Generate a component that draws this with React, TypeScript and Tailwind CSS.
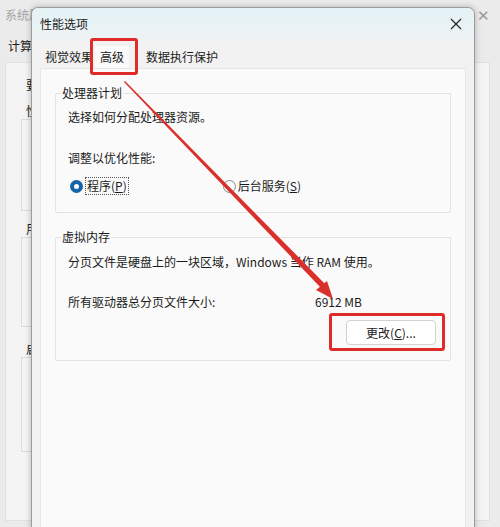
import React from "react";

function Radio({ checked }: { checked?: boolean }) {
  return checked ? (
    <span className="w-[13px] h-[13px] rounded-full bg-[#1565a8] flex items-center justify-center shrink-0">
      <span className="w-[5px] h-[5px] rounded-full bg-white" />
    </span>
  ) : (
    <span className="block w-[13px] h-[13px] rounded-full border border-[#8a8a8a] bg-[#fafafa] shrink-0" />
  );
}

function GroupBox({
  label,
  className,
  children,
}: {
  label: string;
  className?: string;
  children: React.ReactNode;
}) {
  return (
    <div className={`relative border border-[#e3e3e3] rounded-[2px] bg-[#fafafa] ${className ?? ""}`}>
      <span className="absolute left-[5px] top-[-9px] px-[1px] bg-[#fafafa] leading-[16px]">{label}</span>
      {children}
    </div>
  );
}

export default function App() {
  return (
    <div className="relative w-[500px] h-[527px] overflow-hidden bg-[#ebebeb] text-[12px] text-[#1b1b1b] font-['Noto_Sans_CJK_SC','Microsoft_YaHei',sans-serif]">
      {/* background window: 系统属性, mostly hidden behind the dialog */}
      <div className="flex flex-col h-full">
        <div className="h-[30px] flex items-center justify-between pl-[5px] pr-[10px] text-[#a3a3a3]">
          <span>系统属性</span>
          <span className="text-[15px] font-light text-[#9a9a9a]">✕</span>
        </div>
        <div className="h-[32px] flex items-center pl-[8px]">
          <span>计算机名</span>
        </div>
        <div className="flex-1 ml-[5px] mr-[10px] mb-[6px] bg-[#f4f4f4] border border-[#e0e0e0] px-[15px] pt-[14px]">
          <div className="pl-[5px] leading-[16px]">要</div>
          <div className="mt-[10px] pl-[5px] leading-[16px]">性</div>
          <div className="h-[92px] border border-[#dcdcdc]" />
          <div className="mt-[10px] pl-[5px] leading-[16px]">用</div>
          <div className="h-[90px] border border-[#dcdcdc]" />
          <div className="mt-[14px] pl-[5px] leading-[16px]">启</div>
          <div className="h-[95px] border border-[#dcdcdc]" />
        </div>
      </div>

      {/* 性能选项 dialog */}
      <div className="absolute left-[31px] top-[7px] w-[444px] bottom-[-4px] flex flex-col bg-[#f2f2f2] border border-[#9c9c9c] rounded-t-[7px] shadow-[0_0_6px_rgba(0,0,0,0.25)]">
        <div className="h-[32px] flex items-center justify-between pl-[8px] pr-[10px] rounded-t-[7px] bg-[linear-gradient(#e4f3f6,#eef3f4)]">
          <span>性能选项</span>
          <svg width="12" height="12" viewBox="0 0 12 12" className="mr-[2px]">
            <path d="M1 1 L11 11 M11 1 L1 11" stroke="#1f1f1f" strokeWidth="1.1" />
          </svg>
        </div>
        <div className="h-[28px] flex items-end pl-[8px]">
          <span className="pl-[5px] pr-[2px] pb-[2px]">视觉效果</span>
          <span className="px-[5px] pb-[2px] pt-[2px] bg-[#fafafa]">高级</span>
          <span className="ml-[12px] pl-[5px] pb-[2px]">数据执行保护</span>
        </div>
        <div className="flex-1 mx-[8px] bg-[#fafafa] border-t border-x border-[#e6e6e6] pt-[24px] px-[14px]">
          <GroupBox label="处理器计划" className="h-[120px]">
            <div className="pl-[12px] pt-[14px] leading-[18px]">选择如何分配处理器资源。</div>
            <div className="pl-[12px] mt-[23px] leading-[18px]">调整以优化性能:</div>
            <div className="flex items-center mt-[10px] pl-[14px]">
              <Radio checked />
              <span className="ml-[2px] px-[1px] border border-dotted border-[#555] leading-[16px]">
                程序(<span className="underline">P</span>)
              </span>
              <span className="ml-[94px]">
                <Radio />
              </span>
              <span className="ml-[2px] leading-[16px]">
                后台服务(<span className="underline">S</span>)
              </span>
            </div>
          </GroupBox>
          <GroupBox label="虚拟内存" className="h-[124px] mt-[24px]">
            <div className="pl-[12px] pt-[15px] leading-[18px]">
              分页文件是硬盘上的一块区域，Windows 当作 RAM 使用。
            </div>
            <div className="flex pl-[12px] mt-[22px] leading-[18px]">
              <span className="w-[247px]">所有驱动器总分页文件大小:</span>
              <span>6912 MB</span>
            </div>
            <div className="flex justify-end pr-[14px] mt-[9px]">
              <button className="w-[90px] h-[25px] bg-white border border-[#d2d2d2] rounded-[4px] text-[12px] leading-[16px]">
                更改(<span className="underline">C</span>)...
              </button>
            </div>
          </GroupBox>
        </div>
      </div>

      {/* annotation overlays */}
      <div className="absolute left-[90px] top-[38px] w-[48px] h-[37px] border-[3px] border-[#df2c28] rounded-[3px]" />
      <div className="absolute left-[329px] top-[313px] w-[116px] h-[38px] border-[3px] border-[#df2c28] rounded-[3px]" />
      <svg className="absolute left-0 top-0 pointer-events-none" width="500" height="527" viewBox="0 0 500 527">
        <polygon points="124,82 125,81 326,285 322,289" fill="#d9302b" />
        <polygon points="333,299 316,290 327,281" fill="#d9302b" />
      </svg>
    </div>
  );
}
